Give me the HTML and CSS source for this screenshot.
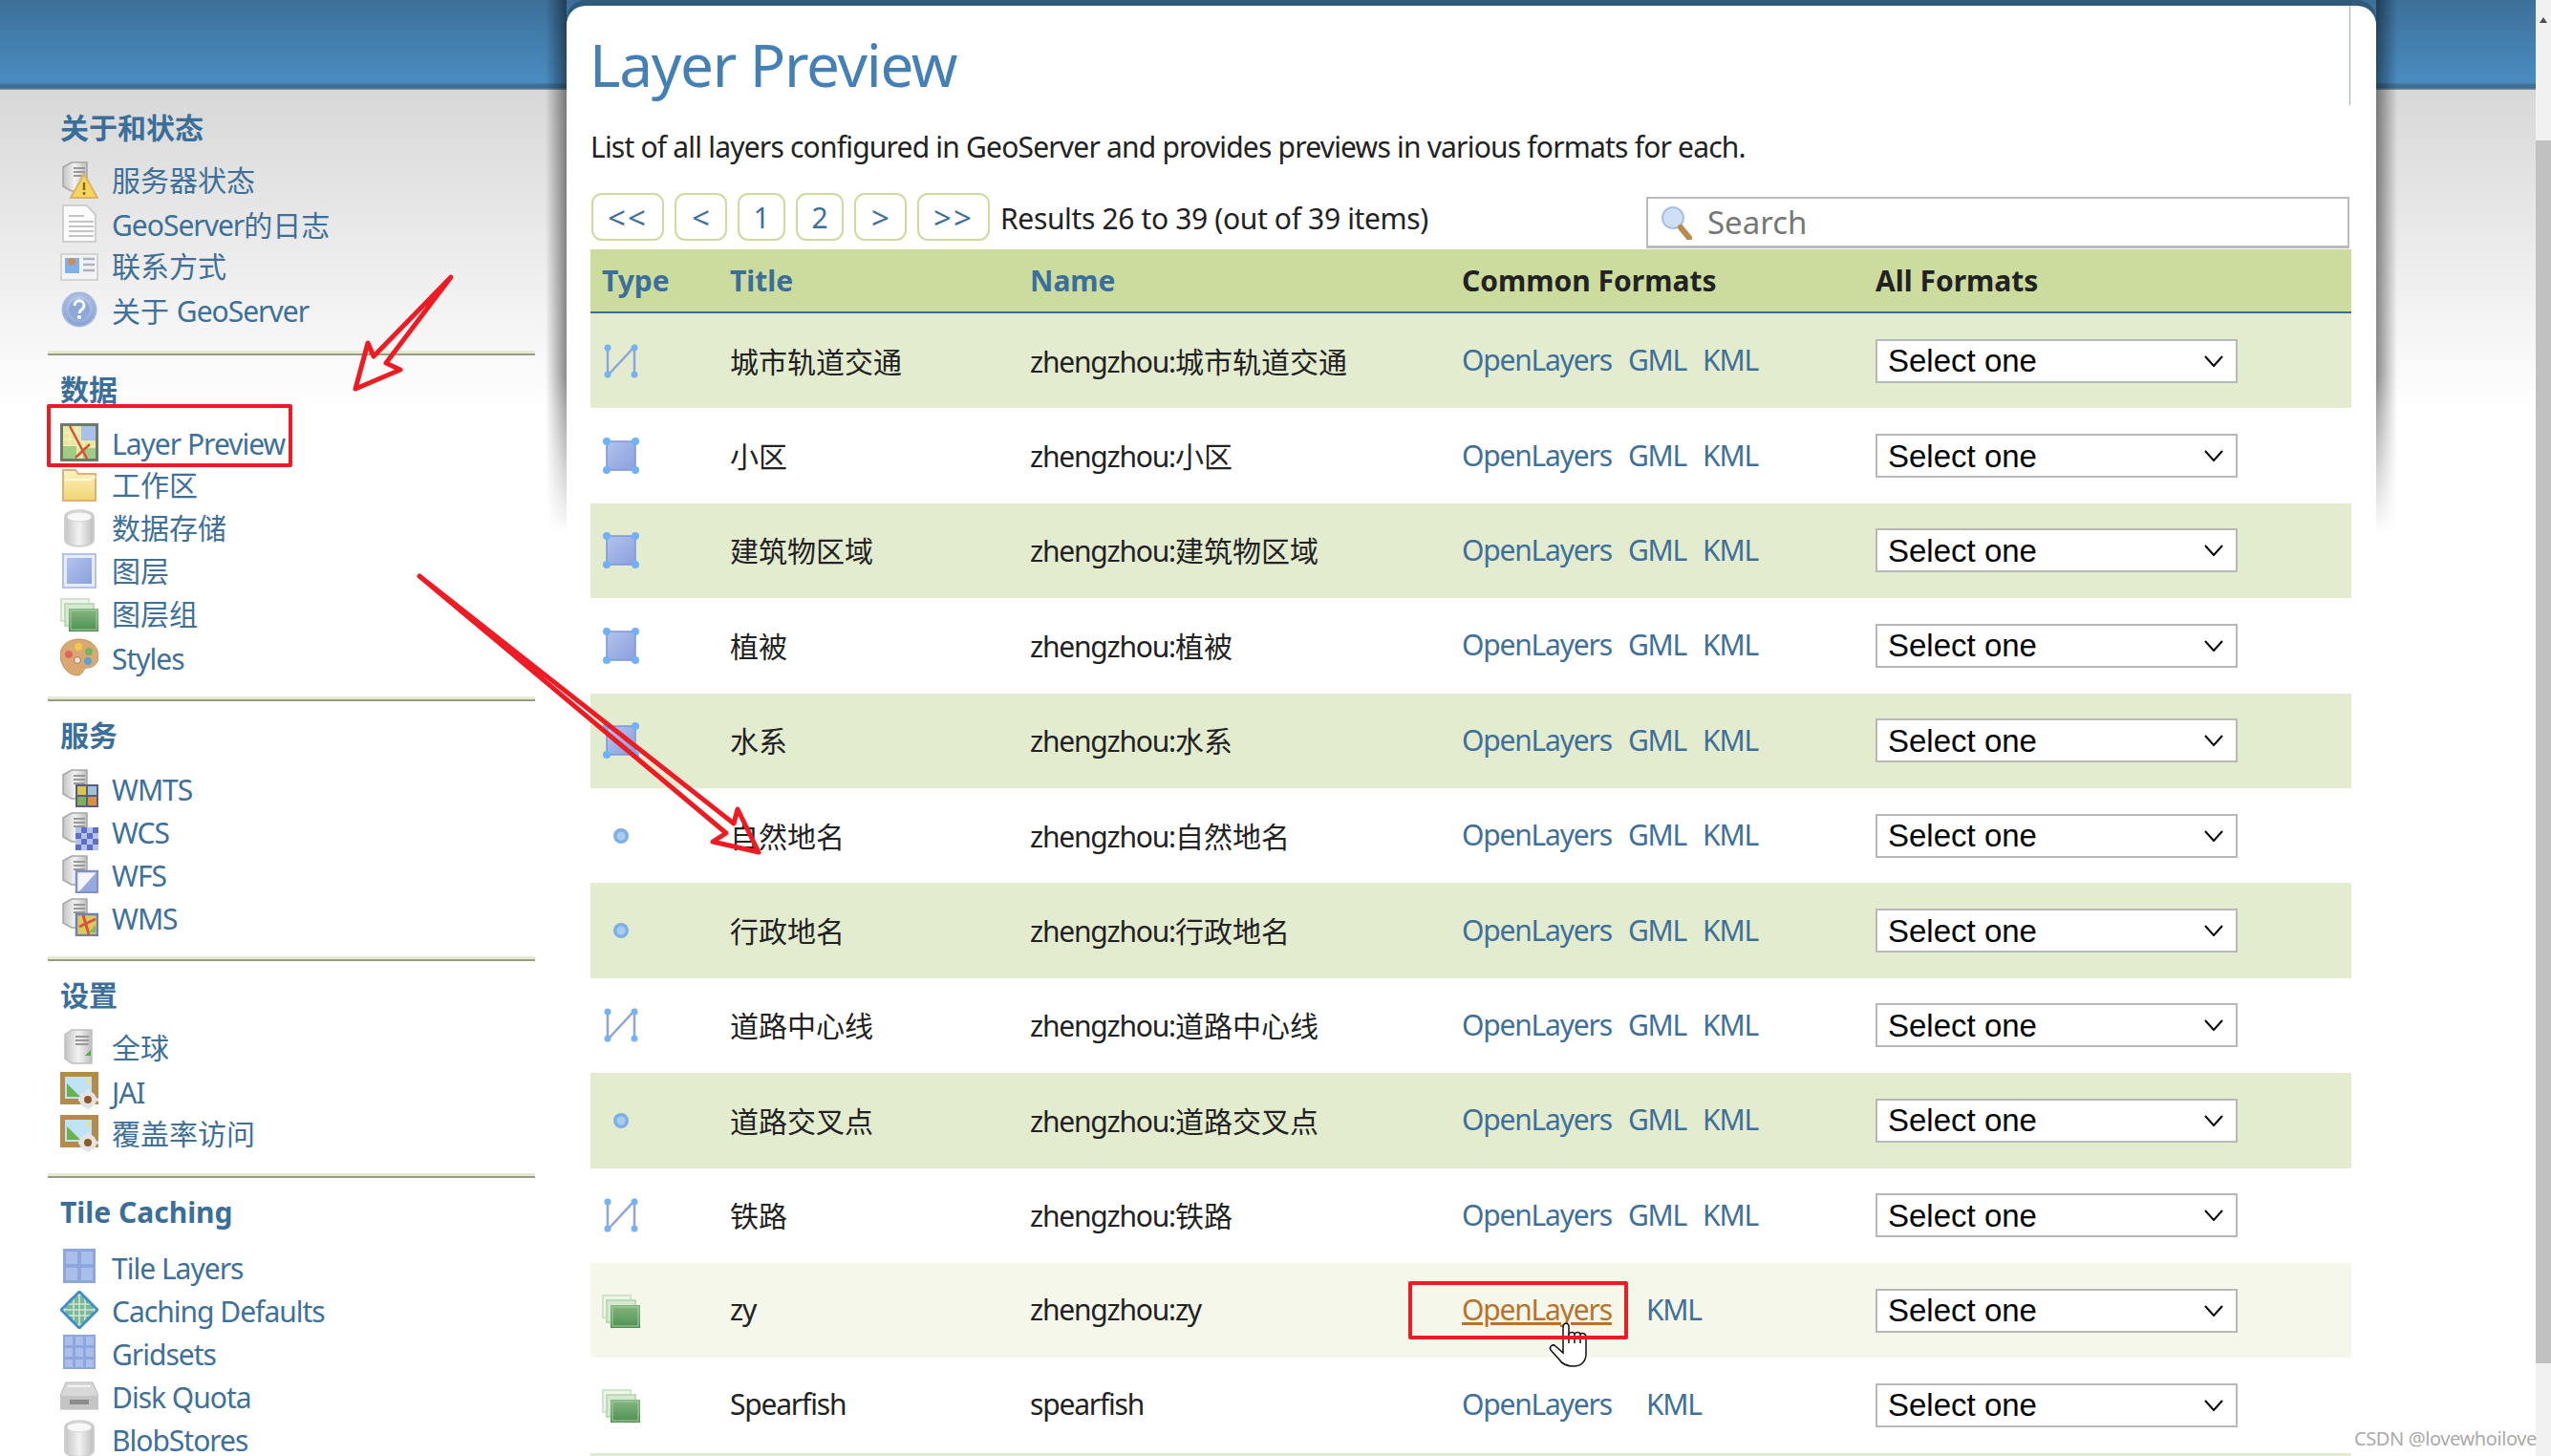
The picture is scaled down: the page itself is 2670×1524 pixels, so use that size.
FILE: index.html
```html
<!DOCTYPE html>
<html lang="zh-CN">
<head>
<meta charset="utf-8">
<title>GeoServer: Layer Preview</title>
<link rel="stylesheet" href="styles.css">
</head>
<body>
<svg class="defs" width="0" height="0" aria-hidden="true">
  <defs>
    <linearGradient id="gGrey" x1="0" x2="1" y1="0" y2="0"><stop offset="0" stop-color="#c4c4c4"/><stop offset=".5" stop-color="#f2f2f2"/><stop offset="1" stop-color="#bdbdbd"/></linearGradient>
    <linearGradient id="gBlue" x1="0" x2="1" y1="0" y2="1"><stop offset="0" stop-color="#b2c3ec"/><stop offset="1" stop-color="#8ba0de"/></linearGradient>
    <linearGradient id="gGreen" x1="0" x2="0" y1="0" y2="1"><stop offset="0" stop-color="#86b883"/><stop offset="1" stop-color="#4c8f4e"/></linearGradient>
    <linearGradient id="gFolder" x1="0" x2="0" y1="0" y2="1"><stop offset="0" stop-color="#fdf3c4"/><stop offset="1" stop-color="#f2d470"/></linearGradient>
    <radialGradient id="gHelp" cx=".5" cy=".4" r=".6"><stop offset="0" stop-color="#dfe7f6"/><stop offset="1" stop-color="#7f9bd0"/></radialGradient>
    <symbol id="i-tower" viewBox="0 0 40 40"><path d="M12 1h16v30H12L3 26V6z" fill="url(#gGrey)" stroke="#a6a6a6" stroke-width="1.5"/><path d="M14 7h12M14 11h12M14 15h12" stroke="#999" stroke-width="2"/></symbol>
    <symbol id="i-warn" viewBox="0 0 40 40"><use href="#i-tower"/><path d="M25 13l14 25H11z" fill="#f6d55c" stroke="#d9b36a" stroke-width="2"/><path d="M25 22v8M25 32v3" stroke="#8a6a1a" stroke-width="2.5"/></symbol>
    <symbol id="i-doc" viewBox="0 0 40 40"><path d="M3 1h25l9 10v28H3z" fill="#fbfbfb" stroke="#cfcfcf" stroke-width="2"/><path d="M9 12h16M9 18h26M9 23h26M9 28h26M9 33h26" stroke="#c4c4c4" stroke-width="2"/></symbol>
    <symbol id="i-card" viewBox="0 0 40 40"><rect x="1" y="7" width="38" height="27" fill="#f3f3f3" stroke="#d4d4d4" stroke-width="2"/><rect x="5" y="11" width="15" height="16" fill="#7fb0ea"/><circle cx="12" cy="15" r="4" fill="#c98f5a"/><path d="M24 12h12M24 18h12M24 24h12" stroke="#aab4c2" stroke-width="2.5"/></symbol>
    <symbol id="i-help" viewBox="0 0 40 40"><circle cx="20" cy="20" r="17.5" fill="url(#gHelp)" stroke="#a5b9e0" stroke-width="2"/><circle cx="20" cy="20" r="11" fill="#8ea8d8"/><path d="M15 16c0-7 10-7 10 0 0 4-5 4-5 8" fill="none" stroke="#fff" stroke-width="3"/><circle cx="20" cy="28" r="2" fill="#fff"/></symbol>
    <symbol id="i-map" viewBox="0 0 40 40"><rect x="0" y="0" width="40" height="40" fill="#6d7a68"/><rect x="3" y="3" width="34" height="34" fill="#e8e8a0"/><path d="M3 10h34M3 17h34M3 24h34M3 31h34M10 3v34M17 3v34M24 3v34M31 3v34" stroke="#f5f5c8" stroke-width="1"/><rect x="22" y="3" width="15" height="15" fill="#a9c0ea"/><rect x="3" y="24" width="14" height="13" fill="#9fce82"/><rect x="24" y="26" width="13" height="11" fill="#9fce82"/><path d="M10 3l18 34M16 36l15-14" stroke="#d8503c" stroke-width="2.5" fill="none"/></symbol>
    <symbol id="i-folder" viewBox="0 0 40 40"><path d="M3 4h13l3 4h18v28H3z" fill="url(#gFolder)" stroke="#e0b070" stroke-width="2"/><path d="M5 14h26l6-3" stroke="#fffbe0" stroke-width="2" fill="none"/></symbol>
    <symbol id="i-db" viewBox="0 0 40 40"><path d="M5 8c0-9 30-9 30 0v24c0 9-30 9-30 0z" fill="url(#gGrey)" stroke="#cfcfcf" stroke-width="2"/><ellipse cx="20" cy="8" rx="13" ry="5" fill="#f8f8f8" stroke="#d4d4d4" stroke-width="1"/></symbol>
    <symbol id="i-layer" viewBox="0 0 40 40"><rect x="3" y="2" width="34" height="35" fill="#e6ecf8" stroke="#b4c4e6" stroke-width="2"/><rect x="7" y="6" width="26" height="27" fill="url(#gBlue)"/></symbol>
    <symbol id="i-group" viewBox="0 0 40 40"><rect x="1" y="4" width="29" height="23" fill="#eef6ea" stroke="#cfe4ca" stroke-width="2"/><rect x="5" y="9" width="30" height="23" fill="#d6e9d0" stroke="#bcdab6" stroke-width="2"/><rect x="9" y="14" width="31" height="24" fill="url(#gGreen)"/><rect x="11" y="16" width="27" height="20" fill="none" stroke="#a8d0a4" stroke-width="1"/></symbol>
    <symbol id="i-palette" viewBox="0 0 40 40"><path d="M20 1c12 0 20 8 20 18 0 8-6 12-12 12-4 0-4 8-10 8C8 39 0 28 0 18 0 8 8 1 20 1z" fill="#d9a873" stroke="#c49260" stroke-width="1"/><circle cx="9" cy="17" r="4" fill="#e0675c"/><circle cx="19" cy="9" r="4" fill="#f2c94c"/><circle cx="30" cy="14" r="4" fill="#77b35c"/><circle cx="29" cy="24" r="4" fill="#58a3d6"/><circle cx="18" cy="23" r="3.5" fill="#f4e4cf" stroke="#9a7a5a"/></symbol>
    <symbol id="i-wmts" viewBox="0 0 40 40"><use href="#i-tower"/><rect x="16" y="16" width="24" height="24" fill="#56607e"/><rect x="18" y="18" width="9" height="9" fill="#d9c44c"/><rect x="29" y="18" width="9" height="9" fill="#9fc0dc"/><rect x="18" y="29" width="9" height="9" fill="#7fae62"/><rect x="29" y="29" width="9" height="9" fill="#d9923c"/></symbol>
    <symbol id="i-wcs" viewBox="0 0 40 40"><use href="#i-tower"/><rect x="16" y="16" width="24" height="24" fill="#5f6fc4"/><path d="M16 16h6v6h-6zM28 16h6v6h-6zM22 22h6v6h-6zM34 22h6v6h-6zM16 28h6v6h-6zM28 28h6v6h-6zM22 34h6v6h-6zM34 34h6v6h-6z" fill="#b7c1ee"/></symbol>
    <symbol id="i-wfs" viewBox="0 0 40 40"><use href="#i-tower"/><rect x="17" y="17" width="22" height="22" fill="#f4f6fc" stroke="#7f90cc" stroke-width="2.5"/><path d="M38 18v20H20z" fill="#97a9dd"/></symbol>
    <symbol id="i-wms" viewBox="0 0 40 40"><use href="#i-tower"/><rect x="17" y="17" width="22" height="22" fill="#dfc95c" stroke="#6d7fb8" stroke-width="2.5"/><path d="M24 18l6 20M20 30l17-8" stroke="#d2553c" stroke-width="3"/><path d="M30 36h7v-8z" fill="#7fb862"/></symbol>
    <symbol id="i-global" viewBox="0 0 40 40"><path d="M12 1h21v35H12L5 31V6z" fill="url(#gGrey)" stroke="#c0c0c0" stroke-width="1.5"/><path d="M16 8h14M16 12h14M16 16h14" stroke="#9a9a9a" stroke-width="2"/><path d="M32 22v6h-6z" fill="#4fae46"/></symbol>
    <symbol id="i-jai" viewBox="0 0 40 40"><rect x="0" y="0" width="40" height="34" fill="#b68a4a"/><rect x="5" y="5" width="28" height="23" fill="#bfe2f6"/><path d="M7 26l0-14 14 14z" fill="#6ab04c"/><path d="M26 8l5 0 0 6z" fill="#f6e27a"/><circle cx="29" cy="29" r="9" fill="#e4e4e4"/><circle cx="29" cy="29" r="4" fill="#8a5a2a"/><path d="M29 18v5M29 35v4M19 29h4M35 29h5" stroke="#e4e4e4" stroke-width="3"/></symbol>
    <symbol id="i-tile" viewBox="0 0 40 40"><rect x="3" y="1" width="34" height="36" fill="#8ea6dc"/><path d="M6 4h12v13H6zM22 4h12v13H22zM6 21h12v13H6zM22 21h12v13H22z" fill="#a9bfea"/></symbol>
    <symbol id="i-globe" viewBox="0 0 40 40"><circle cx="20" cy="20" r="15" fill="#79b79c"/><path d="M5 14h30M4 20h32M5 26h30M14 5v30M20 3v34M26 5v30" stroke="#cfe6cf" stroke-width="1.6"/><path d="M20 1L1 20l19 19L39 20z" fill="none" stroke="#3f8fc4" stroke-width="3"/></symbol>
    <symbol id="i-grid" viewBox="0 0 40 40"><rect x="3" y="1" width="34" height="36" fill="#8ea6dc"/><path d="M5 3h8v9H5zM16 3h8v9h-8zM27 3h8v9h-8zM5 15h8v9H5zM16 15h8v9h-8zM27 15h8v9h-8zM5 27h8v8H5zM16 27h8v8h-8zM27 27h8v8h-8z" fill="#a9bfea"/></symbol>
    <symbol id="i-disk" viewBox="0 0 40 40"><path d="M6 6h28l6 14v14H0V20z" fill="#d8d8d8" stroke="#b4b4b4" stroke-width="1"/><path d="M1 20h38v14H1z" fill="#c4c4c4"/><rect x="10" y="24" width="20" height="5" fill="#8c8c8c"/><path d="M8 10h24" stroke="#f2f2f2" stroke-width="2"/></symbol>
    <symbol id="t-line" viewBox="0 0 40 40"><path d="M6 5v30L34 5v30" fill="none" stroke="#8ea6dc" stroke-width="2.5"/><g fill="#76b3f2"><circle cx="6" cy="6" r="3.5"/><circle cx="6" cy="34" r="3.5"/><circle cx="34" cy="6" r="3.5"/><circle cx="34" cy="34" r="3.5"/></g></symbol>
    <symbol id="t-poly" viewBox="0 0 40 40"><rect x="5" y="5" width="30" height="30" fill="url(#gBlue)" stroke="#7f95d8" stroke-width="1.5"/><g fill="#6fb2fa"><circle cx="5" cy="5" r="4"/><circle cx="5" cy="35" r="4"/><circle cx="35" cy="5" r="4"/><circle cx="35" cy="35" r="4"/></g></symbol>
    <symbol id="t-point" viewBox="0 0 40 40"><circle cx="20" cy="20" r="8" fill="#7fb0e4"/><circle cx="20" cy="20" r="4.5" fill="#a9cdf0"/></symbol>
  </defs>
</svg>

<div class="shell">
  <div class="page">
    <header class="masthead"></header>
    <div class="layout">
      <nav class="side">
        <section class="sect">
          <h3 class="sect-title zh">关于和状态</h3>
          <ul class="menu">
            <li class="item"><svg class="ico"><use href="#i-warn"/></svg><span class="zh">服务器状态</span></li>
            <li class="item"><svg class="ico"><use href="#i-doc"/></svg><span>GeoServer<span class="zh">的日志</span></span></li>
            <li class="item"><svg class="ico"><use href="#i-card"/></svg><span class="zh">联系方式</span></li>
            <li class="item"><svg class="ico"><use href="#i-help"/></svg><span><span class="zh">关于 </span>GeoServer</span></li>
          </ul>
        </section>
        <section class="sect">
          <h3 class="sect-title zh">数据</h3>
          <ul class="menu">
            <li class="item"><svg class="ico"><use href="#i-map"/></svg><span>Layer Preview</span></li>
            <li class="item"><svg class="ico"><use href="#i-folder"/></svg><span class="zh">工作区</span></li>
            <li class="item"><svg class="ico"><use href="#i-db"/></svg><span class="zh">数据存储</span></li>
            <li class="item"><svg class="ico"><use href="#i-layer"/></svg><span class="zh">图层</span></li>
            <li class="item"><svg class="ico"><use href="#i-group"/></svg><span class="zh">图层组</span></li>
            <li class="item"><svg class="ico"><use href="#i-palette"/></svg><span>Styles</span></li>
          </ul>
        </section>
        <section class="sect">
          <h3 class="sect-title zh">服务</h3>
          <ul class="menu">
            <li class="item"><svg class="ico"><use href="#i-wmts"/></svg><span>WMTS</span></li>
            <li class="item"><svg class="ico"><use href="#i-wcs"/></svg><span>WCS</span></li>
            <li class="item"><svg class="ico"><use href="#i-wfs"/></svg><span>WFS</span></li>
            <li class="item"><svg class="ico"><use href="#i-wms"/></svg><span>WMS</span></li>
          </ul>
        </section>
        <section class="sect">
          <h3 class="sect-title zh">设置</h3>
          <ul class="menu">
            <li class="item"><svg class="ico"><use href="#i-global"/></svg><span class="zh">全球</span></li>
            <li class="item"><svg class="ico"><use href="#i-jai"/></svg><span>JAI</span></li>
            <li class="item"><svg class="ico"><use href="#i-jai"/></svg><span class="zh">覆盖率访问</span></li>
          </ul>
        </section>
        <section class="sect">
          <h3 class="sect-title">Tile Caching</h3>
          <ul class="menu">
            <li class="item"><svg class="ico"><use href="#i-tile"/></svg><span>Tile Layers</span></li>
            <li class="item"><svg class="ico"><use href="#i-globe"/></svg><span>Caching Defaults</span></li>
            <li class="item"><svg class="ico"><use href="#i-grid"/></svg><span>Gridsets</span></li>
            <li class="item"><svg class="ico"><use href="#i-disk"/></svg><span>Disk Quota</span></li>
            <li class="item"><svg class="ico"><use href="#i-db"/></svg><span>BlobStores</span></li>
          </ul>
        </section>
      </nav>

      <main class="panel">
        <h1 class="page-title">Layer Preview</h1>
        <p class="intro">List of all layers configured in GeoServer and provides previews in various formats for each.</p>
        <div class="toolbar">
          <div class="pager">
            <a class="pg pg-first">&lt;&lt;</a>
            <a class="pg pg-prev">&lt;</a>
            <a class="pg pg-num">1</a>
            <a class="pg pg-num">2</a>
            <a class="pg pg-prev">&gt;</a>
            <a class="pg pg-first">&gt;&gt;</a>
            <span class="results">Results 26 to 39 (out of 39 items)</span>
          </div>
          <div class="search">
            <svg class="search-ico" viewBox="0 0 36 36"><circle cx="13" cy="13" r="11" fill="#cfdff5" stroke="#a9c0e4" stroke-width="2"/><path d="M21 23l9 11" stroke="#b98a4c" stroke-width="6" stroke-linecap="round"/></svg>
            <span class="search-text">Search</span>
          </div>
        </div>

        <div class="table">
          <div class="row head">
            <div class="th th-blue">Type</div><div class="th th-blue">Title</div><div class="th th-blue">Name</div><div class="th">Common Formats</div><div class="th">All Formats</div>
          </div>
          <div class="row alt"><svg class="tico"><use href="#t-line"/></svg><div class="zh">城市轨道交通</div><div>zhengzhou:<span class="zh">城市轨道交通</span></div><div class="links"><a class="lk">OpenLayers</a><a class="lk">GML</a><a class="lk">KML</a></div><select class="fmt"><option>Select one</option></select></div>
          <div class="row"><svg class="tico"><use href="#t-poly"/></svg><div class="zh">小区</div><div>zhengzhou:<span class="zh">小区</span></div><div class="links"><a class="lk">OpenLayers</a><a class="lk">GML</a><a class="lk">KML</a></div><select class="fmt"><option>Select one</option></select></div>
          <div class="row alt"><svg class="tico"><use href="#t-poly"/></svg><div class="zh">建筑物区域</div><div>zhengzhou:<span class="zh">建筑物区域</span></div><div class="links"><a class="lk">OpenLayers</a><a class="lk">GML</a><a class="lk">KML</a></div><select class="fmt"><option>Select one</option></select></div>
          <div class="row"><svg class="tico"><use href="#t-poly"/></svg><div class="zh">植被</div><div>zhengzhou:<span class="zh">植被</span></div><div class="links"><a class="lk">OpenLayers</a><a class="lk">GML</a><a class="lk">KML</a></div><select class="fmt"><option>Select one</option></select></div>
          <div class="row alt"><svg class="tico"><use href="#t-poly"/></svg><div class="zh">水系</div><div>zhengzhou:<span class="zh">水系</span></div><div class="links"><a class="lk">OpenLayers</a><a class="lk">GML</a><a class="lk">KML</a></div><select class="fmt"><option>Select one</option></select></div>
          <div class="row"><svg class="tico"><use href="#t-point"/></svg><div class="zh">自然地名</div><div>zhengzhou:<span class="zh">自然地名</span></div><div class="links"><a class="lk">OpenLayers</a><a class="lk">GML</a><a class="lk">KML</a></div><select class="fmt"><option>Select one</option></select></div>
          <div class="row alt"><svg class="tico"><use href="#t-point"/></svg><div class="zh">行政地名</div><div>zhengzhou:<span class="zh">行政地名</span></div><div class="links"><a class="lk">OpenLayers</a><a class="lk">GML</a><a class="lk">KML</a></div><select class="fmt"><option>Select one</option></select></div>
          <div class="row"><svg class="tico"><use href="#t-line"/></svg><div class="zh">道路中心线</div><div>zhengzhou:<span class="zh">道路中心线</span></div><div class="links"><a class="lk">OpenLayers</a><a class="lk">GML</a><a class="lk">KML</a></div><select class="fmt"><option>Select one</option></select></div>
          <div class="row alt"><svg class="tico"><use href="#t-point"/></svg><div class="zh">道路交叉点</div><div>zhengzhou:<span class="zh">道路交叉点</span></div><div class="links"><a class="lk">OpenLayers</a><a class="lk">GML</a><a class="lk">KML</a></div><select class="fmt"><option>Select one</option></select></div>
          <div class="row"><svg class="tico"><use href="#t-line"/></svg><div class="zh">铁路</div><div>zhengzhou:<span class="zh">铁路</span></div><div class="links"><a class="lk">OpenLayers</a><a class="lk">GML</a><a class="lk">KML</a></div><select class="fmt"><option>Select one</option></select></div>
          <div class="row hover"><svg class="tico"><use href="#i-group"/></svg><div>zy</div><div>zhengzhou:zy</div><div class="links"><a class="lk lk-hover">OpenLayers</a><a class="lk lk-wide">KML</a></div><select class="fmt"><option>Select one</option></select></div>
          <div class="row"><svg class="tico"><use href="#i-group"/></svg><div>Spearfish</div><div>spearfish</div><div class="links"><a class="lk">OpenLayers</a><a class="lk lk-wide">KML</a></div><select class="fmt"><option>Select one</option></select></div>
          <div class="row alt"></div>
        </div>
      </main>
    </div>
  </div>
  <div class="scrollbar"><span class="sb-arrow"></span><span class="sb-thumb"></span></div>
</div>

<svg class="marks" viewBox="0 0 2670 1524" aria-hidden="true">
  <g class="hand">
    <path d="M1636 1389c0-5 6-5 6 0v7c2-2 5-2 6 0 2-2 5-2 6 0 3-1 6 0 6 3v18c0 8-5 13-13 13-7 0-12-2-15-7l-9-10c-2-3 2-7 5-4l8 7z"/>
    <path d="M1642 1396v10M1648 1396v10M1654 1396v10"/>
  </g>
  <rect class="mark" x="51" y="425" width="253" height="62"/>
  <rect class="mark" x="1476" y="1343" width="226" height="57"/>
  <path class="mark arrow" d="M472 290L391 373L385 359L372 407L419 387L404 380Z"/>
  <path class="mark arrow" d="M439 603L768 862L772 847L794 892L746 881L760 872Z"/>
</svg>
<div class="watermark">CSDN @lovewhoilove</div>
</body>
</html>
```
FILE: styles.css
```css
* { box-sizing: border-box; }
html, body { margin: 0; padding: 0; height: 1524px; overflow: hidden; background: #fff; }
body {
  font-family: "Noto Sans", "Noto Sans CJK SC", sans-serif;
  font-size: 30px;
  letter-spacing: -1.2px;
  color: #222;
}
.zh { letter-spacing: 0; }
.defs { position: absolute; }
ul { list-style: none; margin: 0; padding: 0; }
h1, h3, p { margin: 0; }

.shell { display: flex; height: 1524px; overflow: hidden; }
.page {
  flex: 1;
  min-width: 0;
  background: linear-gradient(#d8d8d8 94px, #ffffff 430px) no-repeat;
}
.masthead {
  height: 94px;
  background: linear-gradient(#3c7099 0, #4a8cc0 86px, #3d6f95 89px, #3d6f95 92px, #8f9aa3 94px);
}
.layout { display: flex; margin-top: -88px; align-items: flex-start; }

/* sidebar */
.side { width: 593px; padding: 88px 33px 0 50px; flex: none; }
.sect { padding: 16px 0 19px; border-bottom: 2px solid #999b85; position: relative; }
.sect:first-child { padding: 20px 0 21px; }
.sect:last-child .sect-title { margin-bottom: 17px; }
.sect::after { content: ""; position: absolute; left: 0; right: 0; bottom: 0; height: 3px; background: #e4ecd0; }
.sect-title {
  height: 40px;
  line-height: 40px;
  padding-left: 13px;
  font-size: 30px;
  font-weight: 700;
  letter-spacing: 0;
  color: #3b6f9a;
  margin-bottom: 15px;
}
.menu { padding-left: 13px; }
.item { display: flex; align-items: center; height: 45px; padding-bottom: 2px; line-height: 32px; color: #3e7099; white-space: nowrap; letter-spacing: -1px; }
.item .zh { letter-spacing: 0; }
.item > .zh { padding-bottom: 3px; }
.ico { width: 40px; height: 40px; flex: none; margin: 0 14px 4px 0; }

/* main panel */
.panel {
  position: relative;
  width: 1894px;
  flex: none;
  background: #fff;
  border-radius: 20px 20px 0 0;
  box-shadow: 0 -6px 0 #2f5a7c;
  padding: 0 26px 0 25px;
}
.panel::before, .panel::after {
  content: "";
  position: absolute;
  top: -6px;
  height: 560px;
  width: 22px;
  -webkit-mask-image: linear-gradient(#000 70%, transparent);
  mask-image: linear-gradient(#000 70%, transparent);
}
.panel::before { right: 100%; background: linear-gradient(to left, rgba(0,0,0,.45), transparent); }
.panel::after { left: 100%; background: linear-gradient(to right, rgba(0,0,0,.45), transparent); }
.page-title {
  height: 104px;
  padding-top: 25px;
  font-size: 62px;
  line-height: 72px;
  font-weight: 400;
  letter-spacing: -1.3px;
  text-indent: -1px;
  color: #4480b5;
  border-right: 1px solid #9ab0c2;
  margin-right: 1px;
}
.intro { height: 92px; padding-top: 22px; line-height: 44px; white-space: nowrap; letter-spacing: -.8px; }

.toolbar { display: flex; justify-content: space-between; height: 59px; }
.pager { display: flex; align-items: flex-start; gap: 11px; padding-left: 1px; white-space: nowrap; }
.pg {
  display: flex; align-items: center; justify-content: center;
  height: 50px;
  border: 2px solid #cbdc9e;
  border-radius: 11px;
  color: #3e7099;
  letter-spacing: 0;
}
.pg-first { width: 76px; font-size: 33px; letter-spacing: 2px; }
.pg-prev { width: 55px; font-size: 33px; }
.pg-num { width: 50px; }
.results { line-height: 50px; letter-spacing: -.35px; padding-top: 2px; }
.search {
  width: 736px; height: 54px; margin: 4px 2px 0 0;
  display: flex; align-items: center;
  padding-left: 13px;
  background: #fff;
  border: 2px solid #bbb;
  border-bottom-width: 3px;
}
.search-ico { width: 36px; height: 36px; flex: none; margin-right: 13px; }
.search-text { color: #777; font-size: 33px; letter-spacing: 0; }

/* table */
.table { width: 1843px; }
.row {
  display: grid;
  grid-template-columns: 134px 314px 452px 433px 510px;
  align-items: center;
  height: 99.4px;
  white-space: nowrap;
}
.row > * { margin-left: 12px; }
.row > div { padding-bottom: 2px; }
.row.head { height: 67px; background: #cbdc9e; border-bottom: 2px solid #3a6d98; font-weight: 700; letter-spacing: 0; }
.row.head > div { padding-bottom: 0; }
.th-blue { color: #3b6f9a; }
.alt { background: #e4ecd0; }
.hover { background: #f4f7ea; }
.tico { width: 40px; height: 40px; }
.links { display: flex; }
.lk { color: #3e7099; margin-right: 17px; }
.lk-wide { margin-left: 19px; }
.lk-hover { color: #b8722a; text-decoration: underline; }
.fmt {
  appearance: none;
  -webkit-appearance: none;
  width: 379px;
  height: 46px;
  padding: 0 0 0 11px;
  font-family: "Liberation Sans", sans-serif;
  font-size: 33px;
  letter-spacing: 0;
  color: #000;
  border: 2px solid #b8b8b8;
  border-radius: 0;
  background: #fff url("data:image/svg+xml,%3Csvg xmlns='http://www.w3.org/2000/svg' width='20' height='12'%3E%3Cpath d='M1 1l9 10 9-10' fill='none' stroke='%23000' stroke-width='2'/%3E%3C/svg%3E") no-repeat right 13px center;
}

/* scrollbar */
.scrollbar { width: 16px; flex: none; background: #f1f1f1; position: relative; }
.sb-arrow {
  position: absolute; left: 4px; top: 18px;
  border: 4px solid transparent; border-bottom: 6px solid #505050; border-top: 0;
}
.sb-thumb { position: absolute; left: 0; right: 0; top: 147px; height: 1280px; background: #c1c1c1; }

/* annotations */
.marks { position: absolute; left: 0; top: 0; width: 2670px; height: 1524px; pointer-events: none; }
.mark { fill: none; stroke: #ed1c24; stroke-width: 4; stroke-linejoin: round; }
.arrow { stroke-width: 5; }
.hand path { fill: #fff; stroke: #111; stroke-width: 1.5; }
.hand path + path { fill: none; }
.watermark {
  position: absolute; right: 15px; top: 1492px;
  font-size: 20px; letter-spacing: -.4px; color: #aaa;
  font-family: "Noto Sans", sans-serif;
}
```
